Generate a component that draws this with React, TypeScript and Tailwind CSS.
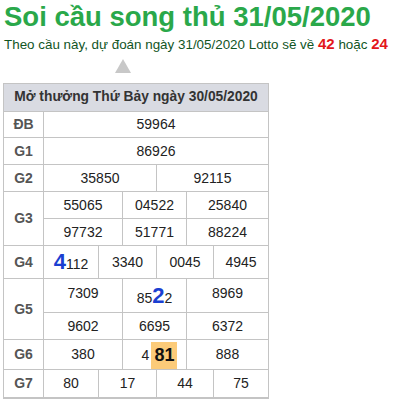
import React from "react";

const cell = "flex items-center justify-center border-l border-t border-[#c4c4c4]";
const label = `${cell} w-[40px] shrink-0 font-bold text-[#555]`;

type Cells = [string, React.ReactNode][];

function Cols({ h, cells }: { h: string; cells: Cells }) {
  return (
    <div className={`flex ${h}`}>
      {cells.map(([w, v], i) => (
        <div key={i} className={`${cell} ${w}`}>
          {v}
        </div>
      ))}
    </div>
  );
}

function Row({ name, h, cells }: { name: string; h: string; cells: Cells }) {
  return (
    <div className={`flex ${h}`}>
      <div className={label}>{name}</div>
      <Cols h="h-full" cells={cells} />
    </div>
  );
}

const w3 = ["w-[79px]", "w-[64px]", "w-[82px]"];
const w4 = ["w-[55px]", "w-[58px]", "w-[57px]", "w-[55px]"];
const tri = (vals: React.ReactNode[]): Cells => vals.map((v, i) => [w3[i], v]);
const quad = (vals: React.ReactNode[]): Cells => vals.map((v, i) => [w4[i], v]);

export default function App() {
  return (
    <div className="min-h-[400px] bg-white font-['Liberation_Sans',Arial,sans-serif] text-[14px] text-[#222]">
      <h1 className="whitespace-nowrap pl-[4px] pt-[1px] text-[27.5px] font-bold leading-[32px] text-[#2aa84a]">
        Soi cầu song thủ 31/05/2020
      </h1>
      <p className="whitespace-nowrap pl-[4px] text-[13.4px] leading-[22px] text-[#11551f]">
        Theo cầu này, dự đoán ngày 31/05/2020 Lotto sẽ về{" "}
        <b className="text-[15px] text-[#e3161b]">42</b> hoặc{" "}
        <b className="text-[15px] text-[#e3161b]">24</b>
      </p>
      <div className="ml-[115px] mt-[3px] h-0 w-0 border-x-[8px] border-b-[14px] border-x-transparent border-b-[#c8c8c8]" />

      <div className="ml-[3px] mt-[10px] w-[266px] border-b-2 border-r border-[#c4c4c4]">
        <div className="flex h-[28px] items-center justify-center whitespace-nowrap border-l border-t border-[#c4c4c4] bg-[#d9dbe2] text-[13.8px] font-bold text-[#333]">
          Mở thưởng Thứ Bảy ngày 30/05/2020
        </div>
        <Row name="ĐB" h="h-[26px]" cells={[["w-[225px]", "59964"]]} />
        <Row name="G1" h="h-[27px]" cells={[["w-[225px]", "86926"]]} />
        <Row name="G2" h="h-[27px]" cells={[["w-[113px]", "35850"], ["w-[112px]", "92115"]]} />
        <div className="flex">
          <div className={label}>G3</div>
          <div className="flex flex-col">
            <Cols h="h-[27px]" cells={tri(["55065", "04522", "25840"])} />
            <Cols h="h-[27px]" cells={tri(["97732", "51771", "88224"])} />
          </div>
        </div>
        <Row
          name="G4"
          h="h-[33px]"
          cells={quad([
            <span className="pt-[2px]">
              <b className="text-[22px] leading-none text-[#1b3fd1]">4</b>112
            </span>,
            "3340",
            "0045",
            "4945",
          ])}
        />
        <div className="flex">
          <div className={label}>G5</div>
          <div className="flex flex-col">
            <Cols
              h="h-[34px]"
              cells={tri([
                <span className="self-start pt-[4px]">7309</span>,
                <span className="pt-[3px]">
                  85<b className="text-[22px] leading-none text-[#1b3fd1]">2</b>2
                </span>,
                <span className="self-start pt-[4px]">8969</span>,
              ])}
            />
            <Cols h="h-[27px]" cells={tri(["9602", "6695", "6372"])} />
          </div>
        </div>
        <Row
          name="G6"
          h="h-[30px]"
          cells={tri([
            "380",
            <span className="flex h-full items-center pl-[10px] pt-[2px]">
              <span className="mr-[2px]">4</span>
              <b className="flex h-[27px] items-center bg-[#fccb79] px-[3px] text-[18px] text-[#111]">81</b>
            </span>,
            "888",
          ])}
        />
        <Row name="G7" h="h-[28px]" cells={quad(["80", "17", "44", "75"])} />
      </div>
    </div>
  );
}
